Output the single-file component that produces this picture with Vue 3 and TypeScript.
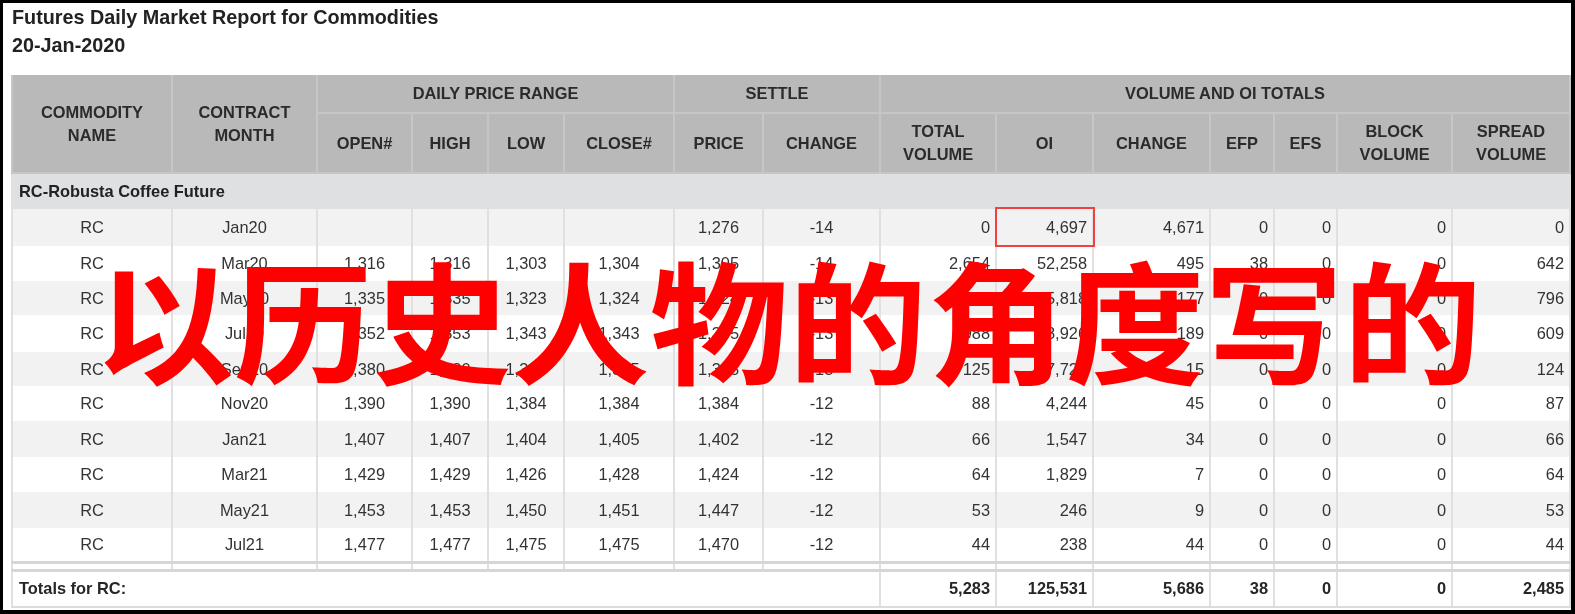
<script setup lang="ts">
interface Row { h: number; cells: string[] }
const columns = [160, 145, 95, 76, 76, 110, 89, 117, 116, 97, 117, 64, 63, 115, 118]
const raw: [number, string][] = [
  [37, 'Jan20|||||1,276|-14|0|4,697|4,671|0|0|0|0'],
  [35, 'Mar20|1,316|1,316|1,303|1,304|1,305|-14|2,654|52,258|495|38|0|0|642'],
  [34, 'May20|1,335|1,335|1,323|1,324|1,324|-13|1,965|45,818|177|0|0|0|796'],
  [37, 'Jul20|1,352|1,353|1,343|1,343|1,335|-13|988|8,926|189|0|0|0|609'],
  [34, 'Sep20|1,380|1,380|1,365|1,365|1,365|-13|125|7,725|15|0|0|0|124'],
  [35, 'Nov20|1,390|1,390|1,384|1,384|1,384|-12|88|4,244|45|0|0|0|87'],
  [36, 'Jan21|1,407|1,407|1,404|1,405|1,402|-12|66|1,547|34|0|0|0|66'],
  [35, 'Mar21|1,429|1,429|1,426|1,428|1,424|-12|64|1,829|7|0|0|0|64'],
  [36, 'May21|1,453|1,453|1,450|1,451|1,447|-12|53|246|9|0|0|0|53'],
  [34, 'Jul21|1,477|1,477|1,475|1,475|1,470|-12|44|238|44|0|0|0|44'],
]
const rows: Row[] = raw.map(([h, s]) => ({ h, cells: s.split('|') }))
const totals = ['5,283', '125,531', '5,686', '38', '0', '0', '2,485']
</script>

<template>
  <div class="frame">
    <div class="soft">
      <div class="heading">
        <div>Futures Daily Market Report for Commodities</div>
        <div>20-Jan-2020</div>
      </div>
      <table class="report">
        <colgroup>
          <col v-for="(w, i) in columns" :key="i" :style="{ width: w + 'px' }" />
        </colgroup>
        <thead>
          <tr class="h1">
            <th rowspan="2">COMMODITY<br />NAME</th>
            <th rowspan="2">CONTRACT<br />MONTH</th>
            <th colspan="4">DAILY PRICE RANGE</th>
            <th colspan="2">SETTLE</th>
            <th colspan="7">VOLUME AND OI TOTALS</th>
          </tr>
          <tr class="h2">
            <th>OPEN#</th><th>HIGH</th><th>LOW</th><th>CLOSE#</th>
            <th>PRICE</th><th>CHANGE</th>
            <th>TOTAL<br />VOLUME</th><th>OI</th><th>CHANGE</th><th>EFP</th><th>EFS</th>
            <th>BLOCK<br />VOLUME</th><th>SPREAD<br />VOLUME</th>
          </tr>
        </thead>
        <tbody>
          <tr class="group"><td colspan="15">RC-Robusta Coffee Future</td></tr>
          <tr v-for="(r, i) in rows" :key="i" :class="{ alt: i % 2 === 0 }" :style="{ height: r.h + 'px' }">
            <td class="c">RC</td>
            <td v-for="(v, j) in r.cells" :key="j" :class="j < 7 ? 'c' : 'r'">
              <span v-if="i === 0 && j === 8" class="mark"></span>{{ v }}
            </td>
          </tr>
          <tr class="gap"><td v-for="n in 15" :key="n"></td></tr>
          <tr class="total">
            <td colspan="8" class="label">Totals for RC:</td>
            <td v-for="(v, k) in totals" :key="k" class="r">{{ v }}</td>
          </tr>
        </tbody>
      </table>
    </div>
    <div class="stamp">以历史人物的角度写的</div>
  </div>
</template>

<style>
html, body { margin: 0; background: #fff; }
</style>

<style scoped>
.frame {
  position: relative;
  box-sizing: border-box;
  width: 1575px;
  height: 614px;
  overflow: hidden;
  border-style: solid;
  border-color: #000;
  border-width: 3px 4px 4px 3px;
  background: #fff;
  font-family: "Liberation Sans", Arial, sans-serif;
}
.soft { filter: blur(0.5px); padding: 0 0 0 8px; }
.heading {
  height: 72px;
  padding-left: 1px;
  font-size: 19.8px;
  font-weight: 700;
  line-height: 28px;
  color: #222;
}
.report {
  table-layout: fixed;
  width: 1558px;
  border-collapse: collapse;
  font-size: 16.4px;
  color: #333;
}
th, td { padding: 0; box-sizing: border-box; }
th {
  background: #b9b9b9;
  color: #2b2b2b;
  font-weight: 700;
  line-height: 23px;
  border: 2px solid #c6c6c6;
  border-top: 0;
  text-align: center;
}
.h1 { height: 38px; }
.h2 { height: 60px; }
td { border-left: 2px solid #e0e0e0; border-right: 2px solid #e0e0e0; }
.group { height: 36px; }
.group td {
  background: #dfe0e1;
  border-color: #dfe0e1;
  padding-left: 6px;
  font-weight: 700;
  color: #222;
}
.alt td { background: #f2f2f2; }
.c { text-align: center; }
.r { text-align: right; padding-right: 5px; position: relative; }
.mark {
  position: absolute;
  z-index: 2;
  left: -2px; right: -3px; top: -2px; bottom: -1px;
  border: 2px solid #f04040;
}
.gap { height: 8px; }
.gap td { border-top: 3px solid #d6d6d6; border-bottom: 3px solid #d6d6d6; }
.total { height: 37px; }
.total td { font-weight: 700; color: #262626; border-bottom: 2px solid #dcdcdc; }
.total .label { padding-left: 6px; }
.stamp {
  position: absolute;
  left: 92px;
  top: 234px;
  white-space: nowrap;
  font-family: "Noto Sans CJK SC", sans-serif;
  font-weight: 700;
  font-size: 138.7px;
  line-height: 160px;
  color: #ff0000;
  transform: scaleY(0.95);
}
</style>
